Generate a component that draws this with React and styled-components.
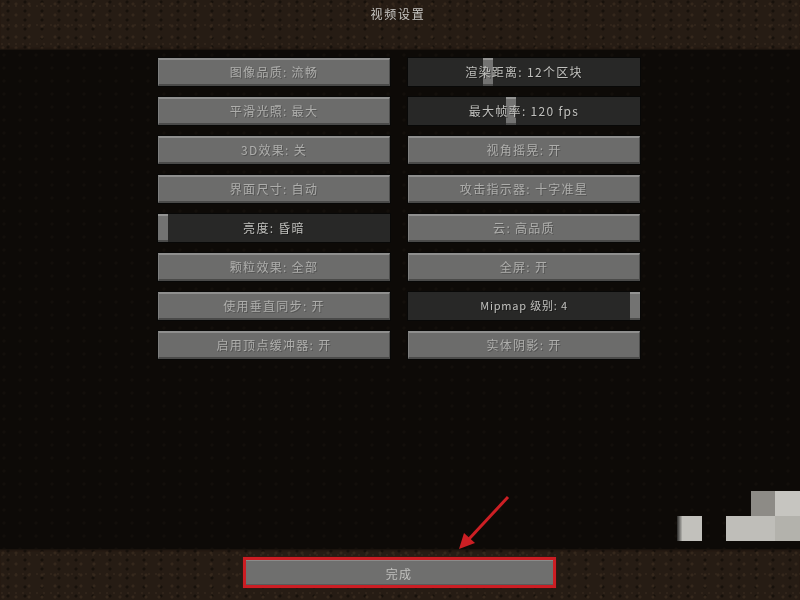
import React from 'react';
import styled, { createGlobalStyle } from 'styled-components';

const leftOptions = [
  { label: '图像品质: 流畅' },
  { label: '平滑光照: 最大' },
  { label: '3D效果: 关' },
  { label: '界面尺寸: 自动' },
  { label: '亮度: 昏暗', knob: 0 },
  { label: '颗粒效果: 全部' },
  { label: '使用垂直同步: 开' },
  { label: '启用顶点缓冲器: 开' },
];

const rightOptions = [
  { label: '渲染距离: 12个区块', knob: 34 },
  { label: '最大帧率: 120 fps', knob: 44 },
  { label: '视角摇晃: 开' },
  { label: '攻击指示器: 十字准星' },
  { label: '云: 高品质' },
  { label: '全屏: 开' },
  { label: 'Mipmap 级别: 4', knob: 100, small: true },
  { label: '实体阴影: 开' },
];

const App = () => (
  <>
    <GlobalStyle />
    <Screen>
      <TopBar>
        <Title>视频设置</Title>
      </TopBar>
      <OptionList>
        <OptionGrid>
          {leftOptions.map((opt, i) => (
            <React.Fragment key={opt.label}>
              <Option {...opt} />
              <Option {...rightOptions[i]} />
            </React.Fragment>
          ))}
        </OptionGrid>
      </OptionList>
      <BottomBar>
        <DoneFrame>
          <DoneButton>完成</DoneButton>
        </DoneFrame>
      </BottomBar>
      <Arrow viewBox="0 0 70 60" aria-hidden="true">
        <line x1="52" y1="3" x2="13" y2="45" stroke="#cc1f24" strokeWidth="3" />
        <polygon points="3,55 8,39 19,49" fill="#cc1f24" />
      </Arrow>
      <Watermark>
        <Block $col="4" $tone="#8d8b86" />
        <Block $col="5" $tone="#c6c5c0" />
        <Block $col="1" $tone="linear-gradient(90deg, #2a2a28, #c2c1bc 22%)" />
        <Block $col="3 / span 2" $tone="#bfbeb9" />
        <Block $col="5" $tone="#b3b2ac" />
      </Watermark>
    </Screen>
  </>
);

const Option = ({ label, knob, small }) => {
  if (knob === undefined) return <Button>{label}</Button>;
  return (
    <Slider>
      <Knob style={{ left: `calc((100% - 10px) * ${knob / 100})` }} />
      <SliderLabel $small={small}>{label}</SliderLabel>
    </Slider>
  );
};

const GlobalStyle = createGlobalStyle`
  html, body {
    margin: 0;
    padding: 0;
    background: #0f0c09;
  }
  * {
    box-sizing: border-box;
  }
`;

const Screen = styled.div`
  position: relative;
  width: 800px;
  height: 600px;
  display: flex;
  flex-direction: column;
  overflow: hidden;
  filter: blur(0.4px);
  font-family: "Noto Sans CJK SC", "Liberation Sans", sans-serif;
`;

const dirt = `
  radial-gradient(circle at 3px 4px, #35281c 0 1px, transparent 2px) 0 0 / 13px 11px,
  radial-gradient(circle at 8px 2px, #17110b 0 1px, transparent 2px) 0 0 / 17px 9px,
  radial-gradient(circle at 2px 6px, #30241a 0 1px, transparent 1.5px) 0 0 / 7px 19px,
  #261c14
`;

const TopBar = styled.header`
  height: 50px;
  flex: none;
  display: flex;
  justify-content: center;
  padding: 5px 4px 0 0;
  background: ${dirt};
  box-shadow: inset 0 -2px 2px -1px #17110c;
`;

const Title = styled.h1`
  margin: 0;
  font-size: 12px;
  font-weight: 400;
  line-height: 18px;
  letter-spacing: 1.8px;
  color: #c8c7c4;
`;

const OptionList = styled.main`
  flex: 1;
  display: flex;
  justify-content: center;
  padding: 8px 2px 0 0;
  background:
    radial-gradient(circle at 4px 5px, #130f0b 0 1px, transparent 2px) 0 0 / 16px 13px,
    #0d0a07;
`;

const OptionGrid = styled.div`
  display: grid;
  grid-template-columns: 232px 232px;
  grid-auto-rows: 28px;
  column-gap: 18px;
  row-gap: 11px;
`;

const Button = styled.div`
  display: flex;
  align-items: center;
  justify-content: center;
  padding-bottom: 1px;
  font-size: 12px;
  letter-spacing: 1.3px;
  color: #aeaeac;
  text-shadow: 1px 1px 0 rgba(60, 60, 60, 0.5);
  background: #6c6c6b;
  border-top: 2px solid #8f8f8e;
  border-left: 1px solid #7f7f7e;
  border-right: 1px solid #4d4d4c;
  border-bottom: 2px solid #4a4a49;
  outline: 1px solid #080807;
`;

const Slider = styled.div`
  position: relative;
  display: flex;
  align-items: center;
  justify-content: center;
  padding-bottom: 2px;
  background: #282827;
  outline: 1px solid #080807;
`;

const SliderLabel = styled.span`
  position: relative;
  font-size: ${(p) => (p.$small ? '11px' : '12px')};
  letter-spacing: ${(p) => (p.$small ? '0.8px' : '1.3px')};
  color: #c0c0bd;
  text-shadow: 1px 1px 0 rgba(20, 20, 20, 0.6);
`;

const Knob = styled.span`
  position: absolute;
  top: 0;
  bottom: 0;
  width: 10px;
  background: #737372;
  border-top: 2px solid #939392;
  border-bottom: 2px solid #4b4b4a;
`;

const BottomBar = styled.footer`
  height: 51px;
  flex: none;
  display: flex;
  justify-content: center;
  padding: 8px 2px 0 0;
  background: ${dirt};
  box-shadow: inset 0 2px 2px -1px #17110c;
`;

const DoneFrame = styled.div`
  width: 313px;
  height: 31px;
  border: 3px solid #cc1d23;
  box-shadow: 0 0 1px #6e1013;
`;

const DoneButton = styled.button`
  display: block;
  width: 100%;
  height: 100%;
  padding: 2px 0 0;
  border: 0;
  border-top: 1px solid #8b8b8a;
  border-bottom: 1px solid #5b5b5a;
  background: #6f6f6e;
  font: inherit;
  font-size: 12px;
  letter-spacing: 1.3px;
  color: #c0c0be;
`;

const Arrow = styled.svg`
  position: absolute;
  left: 456px;
  top: 494px;
  width: 70px;
  height: 60px;
`;

const Watermark = styled.div`
  position: absolute;
  left: 677px;
  top: 491px;
  display: grid;
  grid-template-columns: 25px 24px 25px 24px 25px;
  grid-auto-rows: 25px;
`;

const Block = styled.span`
  grid-column: ${(p) => p.$col};
  background: ${(p) => p.$tone};
`;

export default App;
